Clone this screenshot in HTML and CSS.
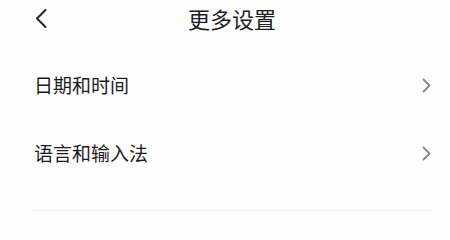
FILE: index.html
```html
<!DOCTYPE html>
<html lang="zh-CN">
<head>
<meta charset="utf-8">
<link rel="stylesheet" href="styles.css">
</head>
<body>
<div class="page">
  <header class="header">
    <svg class="back" width="12" height="19" viewBox="0 0 12 19"><polyline points="10.5,1 2,9.5 10.5,18" fill="none" stroke="#222" stroke-width="2" stroke-linecap="round" stroke-linejoin="round"/></svg>
    <div class="title">更多设置</div>
  </header>
  <div class="list">
    <div class="row"><span class="label">日期和时间</span><svg class="chev" width="9" height="15" viewBox="0 0 9 15"><polyline points="1.5,1.5 7.5,7.5 1.5,13.5" fill="none" stroke="#8a8a8a" stroke-width="1.8" stroke-linecap="round" stroke-linejoin="round"/></svg></div>
    <div class="row"><span class="label">语言和输入法</span><svg class="chev" width="9" height="15" viewBox="0 0 9 15"><polyline points="1.5,1.5 7.5,7.5 1.5,13.5" fill="none" stroke="#8a8a8a" stroke-width="1.8" stroke-linecap="round" stroke-linejoin="round"/></svg></div>
  </div>
  <div class="divider"></div>
</div>
</body>
</html>
```
FILE: styles.css
```css
html, body {
  margin: 0;
  padding: 0;
  background: #fdfdfd;
}
.page {
  width: 450px;
  height: 240px;
  font-family: "Noto Sans CJK SC", "Noto Sans", sans-serif;
  color: #1c1c1c;
}
.header {
  height: 36px;
  display: flex;
  align-items: center;
  padding-left: 35px;
}
.back {
  display: block;
}
.title {
  margin-left: 141px;
  font-size: 22px;
  line-height: 36px;
  color: #202020;
}
.list {
  margin-top: 15px;
  padding: 0 19px 0 34px;
}
.row {
  height: 68px;
  display: flex;
  align-items: center;
  justify-content: space-between;
}
.label {
  font-size: 19px;
  line-height: 24px;
}
.chev {
  display: block;
}
.divider {
  margin: 23px 19px 0 33px;
  height: 1px;
  background: #efefef;
}
```
